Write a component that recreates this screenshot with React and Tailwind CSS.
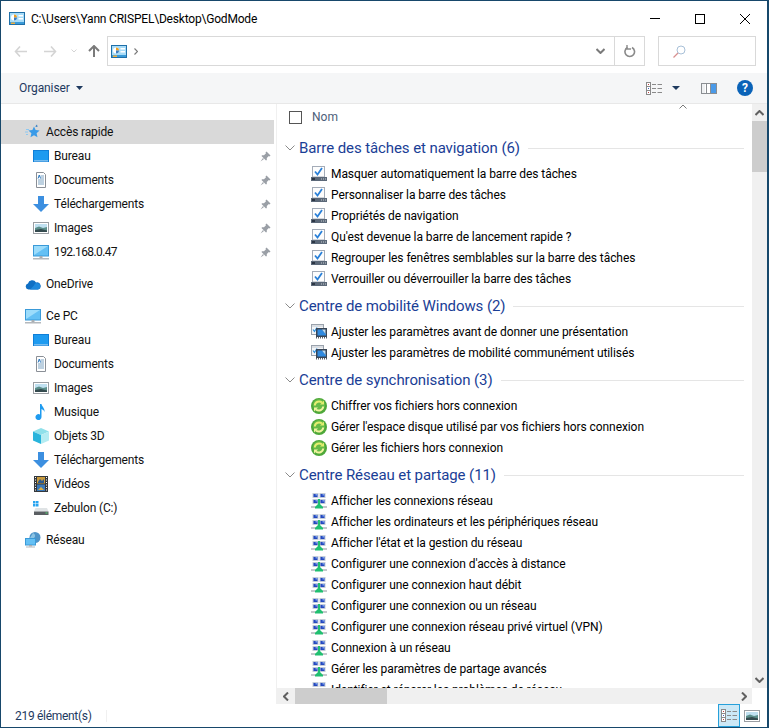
import React from "react";

const FolderGodIcon = ({ className }) => (
  <svg className={className} width="16" height="13" viewBox="0 0 16 13">
    <rect x="0.5" y="0.5" width="15" height="12" fill="#a8dcf8" stroke="#1f6fa8" />
    <rect x="1" y="10" width="14" height="2" fill="#3a9ad8" />
    <circle cx="5" cy="5.5" r="3" fill="#fff" />
    <path d="M5 5.5V2.5a3 3 0 0 1 3 3z" fill="#f0a020" />
    <path d="M5 5.5h3a3 3 0 0 1-3 3z" fill="#3a7cc0" />
    <rect x="9.5" y="3" width="4.5" height="1.5" fill="#fff" />
    <rect x="9.5" y="6" width="4.5" height="1.5" fill="#fff" />
    <rect x="2" y="10.5" width="4" height="1.5" fill="#f0b040" />
  </svg>
);

const Pin = () => (
  <svg width="11" height="11" viewBox="0 0 11 11">
    <path d="M6.5 0.5 10.5 4.5 9.5 5.5 8.8 5 6.8 7 6.8 9 6 9.5 1.5 5 2 4.2H4L6 2.2 5.5 1.5z" fill="#9a9fa6" />
    <path d="M3 7 0.5 10.5 4 8z" fill="#9a9fa6" />
  </svg>
);

const Star = () => (
  <svg width="16" height="16" viewBox="0 0 16 16">
    <path d="M9 2.5l1.6 3.6 4 .4-3 2.7.9 4L9 11.2l-3.5 2 .9-4-3-2.7 4-.4z" fill="#3a9be8" />
    <path d="M1 5.5h3M0 8h3M1 10.5h2" stroke="#8cc8f2" strokeWidth="1" />
    <path d="M12 0.5l.5 2.5-2.3-.5z" fill="#2a78c0" />
  </svg>
);

const Desk = () => (
  <svg width="16" height="12" viewBox="0 0 16 12">
    <rect x="0" y="0" width="16" height="12" fill="#0f7fd8" />
    <rect x="1" y="1" width="14" height="9.5" fill="#1e9bf0" />
    <rect x="1" y="10.5" width="14" height="0.8" fill="#d8eefc" />
  </svg>
);

const Doc = () => (
  <svg width="16" height="16" viewBox="0 0 16 16">
    <path d="M3.5 0.5H10.5L12.5 2.5V15.5H3.5z" fill="#fff" stroke="#8a8f96" />
    <path d="M5 4h2M8 4h3M8 6h3M5 8h6M5 10h6M5 12h6" stroke="#7da3c2" strokeWidth="1" />
    <path d="M5 6.5 6.5 3 7.5 6.5" stroke="#2a78c0" strokeWidth="1" fill="none" />
  </svg>
);

const Down = () => (
  <svg width="16" height="16" viewBox="0 0 16 16">
    <path d="M5 0H11V8H16L8 16 0 8H5z" fill="#3c8fe0" />
  </svg>
);

const Pic = () => (
  <svg width="16" height="12" viewBox="0 0 16 12">
    <rect x="0.5" y="0.5" width="15" height="11" fill="#fff" stroke="#9a9ea3" />
    <rect x="2" y="2" width="12" height="4" fill="#bfe0f0" />
    <path d="M2 6 6 4.5 10 6 14 5V10H2z" fill="#5b8e8a" />
    <path d="M2 8 8 7 14 8.5V10H2z" fill="#344a4e" />
  </svg>
);

const Monitor = () => (
  <svg width="16" height="15" viewBox="0 0 16 15">
    <rect x="0.5" y="0.5" width="15" height="10.5" fill="#64c0f4" stroke="#3a9ad8" />
    <path d="M1 1H15L1 10z" fill="#9cdcfb" />
    <rect x="6.5" y="11" width="3" height="2" fill="#a8adb2" />
    <rect x="0" y="13" width="16" height="1.5" fill="#b4b8bc" />
  </svg>
);

const Cloud = () => (
  <svg width="16" height="11" viewBox="0 0 16 11">
    <path d="M3.5 10.5A3 3 0 0 1 3 4.6 4.3 4.3 0 0 1 11 3.4 3.6 3.6 0 0 1 13 10.5z" fill="#0f6fc4" />
    <path d="M5 10.5 9 6.5a3 3 0 0 1 6 1.5 2.5 2.5 0 0 1-2 2.5z" fill="#1e88dc" />
  </svg>
);

const Music = () => (
  <svg width="16" height="16" viewBox="0 0 16 16">
    <path d="M7 0H8.5C9 3 12 4 11.5 8 11 6 9.5 5.5 8.5 5V13A3 3 0 1 1 7 10.5z" fill="#1e9bf0" />
  </svg>
);

const Cube = () => (
  <svg width="16" height="16" viewBox="0 0 16 16">
    <path d="M8 0 16 3.5 8 7 0 3.5z" fill="#8fe0ea" />
    <path d="M0 3.5 8 7V16L0 12.5z" fill="#28b4dc" />
    <path d="M16 3.5 8 7V16L16 12.5z" fill="#b4ecf2" />
  </svg>
);

const Film = () => (
  <svg width="14" height="16" viewBox="0 0 14 16">
    <rect x="0" y="0" width="14" height="16" fill="#34383c" />
    <rect x="3" y="1" width="8" height="6.5" fill="#c89a3c" />
    <rect x="3" y="8.5" width="8" height="6.5" fill="#3a78b8" />
    <path d="M4 6l2-3 2 2 2-2v4H4z" fill="#2a5a90" />
    <path d="M4 14l3-3 3 3z" fill="#e0b040" />
    <path d="M1 1.5h1M1 4h1M1 6.5h1M1 9h1M1 11.5h1M1 14h1M12 1.5h1M12 4h1M12 6.5h1M12 9h1M12 11.5h1M12 14h1" stroke="#fff" />
  </svg>
);

const Drive = () => (
  <svg width="16" height="15" viewBox="0 0 16 15">
    <rect x="0" y="0" width="2.5" height="2.5" fill="#28a4f0" />
    <rect x="3" y="0" width="2.5" height="2.5" fill="#28a4f0" />
    <rect x="0" y="3" width="2.5" height="2.5" fill="#28a4f0" />
    <rect x="3" y="3" width="2.5" height="2.5" fill="#28a4f0" />
    <path d="M2.5 7H14L15.5 10.5H1z" fill="#dfe3e5" />
    <rect x="1" y="10.5" width="14.5" height="3.5" fill="#5a5e62" />
    <rect x="12.5" y="11.5" width="2" height="1" fill="#50e070" />
  </svg>
);

const Globe = () => (
  <svg width="16" height="16" viewBox="0 0 16 16">
    <circle cx="10" cy="5.5" r="5.5" fill="#4f94c8" />
    <path d="M8 1c2 1 3 3 1 5s-3 1-4 0" fill="#8cc4e4" />
    <rect x="0.5" y="6.5" width="10" height="6.5" fill="#64c0f4" stroke="#3a9ad8" />
    <rect x="4" y="13" width="3" height="1.5" fill="#a8adb2" />
    <rect x="1" y="14.5" width="9" height="1" fill="#b4b8bc" />
  </svg>
);

const TaskIcon = () => (
  <svg width="16" height="15" viewBox="0 0 16 15">
    <rect x="1.5" y="0.5" width="12" height="10.5" fill="#fdfdfd" stroke="#a4acb8" />
    <path d="M4 5.5 6.5 8.5 11 2" fill="none" stroke="#2a80d8" strokeWidth="1.8" />
    <rect x="0" y="11" width="16" height="4" fill="#5b6878" />
    <path d="M10 13h5" stroke="#c8ccd0" strokeDasharray="1 1" />
    <rect x="1" y="12" width="3" height="2" fill="#2c3644" />
  </svg>
);

const MobIcon = () => (
  <svg width="16" height="15" viewBox="0 0 16 15">
    <rect x="0.5" y="0.5" width="12" height="10" fill="#f4f6f8" stroke="#9aa2ac" />
    <path d="M1 2h11" stroke="#c0c6ce" />
    <path d="M2 5.5 3.5 7.5 6 3.5" fill="none" stroke="#2a90e0" strokeWidth="1.2" />
    <rect x="5.5" y="4.5" width="10" height="8" fill="#3a4656" stroke="#3a4656" />
    <path d="M6.5 5.5H11L15 10V11.5H6.5z" fill="#2f8ae0" />
    <path d="M11 5.5H14.5V10z" fill="#bcdcf4" />
    <path d="M5 13.8h11" stroke="#555c66" strokeWidth="1.5" strokeDasharray="1 1" />
  </svg>
);

const SyncIcon = () => (
  <svg width="16" height="16" viewBox="0 0 16 16">
    <circle cx="8" cy="8" r="8" fill="#4ea83a" />
    <circle cx="8" cy="7" r="6" fill="#66bb48" />
    <path d="M3.8 7.5A4.3 4.3 0 0 1 11 4.6" fill="none" stroke="#e6ee70" strokeWidth="2" />
    <path d="M9 6.5H13V2.5z" fill="#e6ee70" />
    <path d="M12.2 8.5A4.3 4.3 0 0 1 5 11.4" fill="none" stroke="#f2f4a0" strokeWidth="2" />
    <path d="M7 9.5H3V13.5z" fill="#f2f4a0" />
  </svg>
);

const NetSq = ({ x, y }) => (
  <>
    <rect x={x} y={y} width="6" height="5" fill="#c4ccd8" />
    <rect x={x + 1} y={y + 1} width="4" height="3" fill="#2448c0" />
    <rect x={x + 3} y={y + 1} width="2" height="1.5" fill="#7ca0e8" />
  </>
);

const NetIcon = () => (
  <svg width="16" height="16" viewBox="0 0 16 16">
    <NetSq x={1.5} y={0} />
    <NetSq x={8.5} y={0} />
    <NetSq x={1.5} y={6} />
    <NetSq x={8.5} y={6} />
    <rect x="0" y="13" width="16" height="2" fill="#c4c8cc" />
    <rect x="7" y="6" width="2" height="5" fill="#20c070" />
    <path d="M8 10 12 14V15.5H4V14z" fill="#20c070" />
  </svg>
);

const DetailsIcon = () => (
  <svg width="16" height="13" viewBox="0 0 16 13">
    <rect x="0.5" y="0.5" width="4" height="12" fill="#fff" stroke="#8a8a8a" />
    <path d="M1 4.5h3M1 8.5h3" stroke="#8a8a8a" />
    <rect x="2" y="2" width="1" height="1" fill="#c04040" />
    <rect x="2" y="6" width="1" height="1" fill="#4060c0" />
    <rect x="2" y="10" width="1" height="1" fill="#c04040" />
    <path d="M6 2.5h4M11.5 2.5H16M6 6.5h4M11.5 6.5H16M6 10.5h4M11.5 10.5H16" stroke="#8a8a8a" />
  </svg>
);

const Chev = ({ d, color = "#6a6a6a", w = 9, h = 6, sw = 2, vb = "0 0 9 6" }) => (
  <svg width={w} height={h} viewBox={vb}>
    <path d={d} fill="none" stroke={color} strokeWidth={sw} />
  </svg>
);

const side = [
  { label: "Accès rapide", icon: <Star />, top: true, sel: true },
  { label: "Bureau", icon: <Desk />, pin: true },
  { label: "Documents", icon: <Doc />, pin: true },
  { label: "Téléchargements", icon: <Down />, pin: true },
  { label: "Images", icon: <Pic />, pin: true },
  { label: "192.168.0.47", icon: <Monitor />, pin: true, last: true, digits: true },
  { label: "OneDrive", icon: <Cloud />, top: true, last: true },
  { label: "Ce PC", icon: <Monitor />, top: true },
  { label: "Bureau", icon: <Desk /> },
  { label: "Documents", icon: <Doc /> },
  { label: "Images", icon: <Pic /> },
  { label: "Musique", icon: <Music /> },
  { label: "Objets 3D", icon: <Cube /> },
  { label: "Téléchargements", icon: <Down /> },
  { label: "Vidéos", icon: <Film /> },
  { label: "Zebulon (C:)", icon: <Drive />, last: true },
  { label: "Réseau", icon: <Globe />, top: true },
];

const groups = [
  {
    title: "Barre des tâches et navigation (6)",
    icon: <TaskIcon />,
    items: [
      "Masquer automatiquement la barre des tâches",
      "Personnaliser la barre des tâches",
      "Propriétés de navigation",
      "Qu'est devenue la barre de lancement rapide ?",
      "Regrouper les fenêtres semblables sur la barre des tâches",
      "Verrouiller ou déverrouiller la barre des tâches",
    ],
  },
  {
    title: "Centre de mobilité Windows (2)",
    icon: <MobIcon />,
    items: [
      "Ajuster les paramètres avant de donner une présentation",
      "Ajuster les paramètres de mobilité communément utilisés",
    ],
  },
  {
    title: "Centre de synchronisation (3)",
    icon: <SyncIcon />,
    items: [
      "Chiffrer vos fichiers hors connexion",
      "Gérer l'espace disque utilisé par vos fichiers hors connexion",
      "Gérer les fichiers hors connexion",
    ],
  },
  {
    title: "Centre Réseau et partage (11)",
    icon: <NetIcon />,
    items: [
      "Afficher les connexions réseau",
      "Afficher les ordinateurs et les périphériques réseau",
      "Afficher l'état et la gestion du réseau",
      "Configurer une connexion d'accès à distance",
      "Configurer une connexion haut débit",
      "Configurer une connexion ou un réseau",
      "Configurer une connexion réseau privé virtuel (VPN)",
      "Connexion à un réseau",
      "Gérer les paramètres de partage avancés",
      "Identifier et réparer les problèmes de réseau",
    ],
  },
];

export default function App() {
  return (
    <div className="w-[769px] h-[728px] flex flex-col overflow-hidden bg-white border-t border-l border-b border-r-2 border-[#17486b] font-['Roboto',sans-serif] text-[12px] text-black">
      {/* Title bar */}
      <div className="h-[35px] shrink-0 flex items-center pl-[8px]">
        <FolderGodIcon />
        <span className="ml-[6px] text-[12px] tracking-[-0.19px]">C:\Users\Yann CRISPEL\Desktop\GodMode</span>
        <div className="ml-auto flex items-center pr-[17px] gap-[35px]">
          <div className="w-[10px] h-[1px] bg-black" />
          <div className="w-[10px] h-[10px] border border-black" />
          <svg width="10" height="10" viewBox="0 0 10 10"><path d="M0 0 10 10M10 0 0 10" stroke="#000" /></svg>
        </div>
      </div>
      {/* Nav row */}
      <div className="h-[37px] shrink-0 flex items-start">
        <div className="w-[106px] h-[30px] shrink-0 flex items-center pl-[13px]">
          <svg width="13" height="11" viewBox="0 0 13 11"><path d="M6 0.5 1.5 5.5 6 10.5M1.5 5.5H13" fill="none" stroke="#d4d4d4" strokeWidth="1.6" /></svg>
          <svg className="ml-[17px]" width="13" height="11" viewBox="0 0 13 11"><path d="M7 0.5 11.5 5.5 7 10.5M11.5 5.5H0" fill="none" stroke="#d4d4d4" strokeWidth="1.6" /></svg>
          <svg className="ml-[14px]" width="6" height="4" viewBox="0 0 6 4"><path d="M0.5 0.5 3 3 5.5 0.5" fill="none" stroke="#d4d4d4" /></svg>
          <svg className="ml-[11px]" width="12" height="12" viewBox="0 0 12 12"><path d="M1 6 6 1 11 6M6 1V12" fill="none" stroke="#7a7a7a" strokeWidth="2" /></svg>
        </div>
        <div className="w-[538px] h-[30px] shrink-0 border border-[#d9d9d9] flex items-center pl-[3px]">
          <FolderGodIcon />
          <svg className="ml-[7px]" width="4" height="7" viewBox="0 0 4 7"><path d="M0.5 0.5 3.5 3.5 0.5 6.5" fill="none" stroke="#7a7a7a" strokeWidth="1.2" /></svg>
          <div className="ml-auto mr-[9px]">
            <Chev d="M0.5 1 4.5 5 8.5 1" color="#7a7a7a" />
          </div>
          <div className="w-[30px] h-full border-l border-[#d9d9d9] flex items-center justify-center">
            <svg width="12" height="13" viewBox="0 0 12 13"><path d="M3.5 2.5A4.8 4.8 0 1 0 8 2.5" fill="none" stroke="#8a8a8a" strokeWidth="1.6" /><path d="M3 0V4H7" fill="none" stroke="#8a8a8a" strokeWidth="1.4" /></svg>
          </div>
        </div>
        <div className="ml-[13px] w-[98px] h-[30px] shrink-0 border border-[#d9d9d9] flex items-center pl-[14px]">
          <svg width="13" height="13" viewBox="0 0 13 13"><circle cx="8" cy="5" r="4" fill="none" stroke="#a8c0d8" /><path d="M5 8 0.5 12.5" stroke="#d89090" strokeWidth="1.2" /></svg>
        </div>
      </div>
      {/* Toolbar */}
      <div className="h-[31px] shrink-0 bg-[#f5f6f7] border-b border-[#e8e8e8] flex items-center pl-[18px]">
        <span className="text-[#1e3a5f] tracking-[-0.1px]">Organiser</span>
        <svg className="ml-[6px]" width="7" height="4" viewBox="0 0 7 4"><path d="M0 0H7L3.5 4z" fill="#1e3a5f" /></svg>
        <div className="ml-auto flex items-center">
          <DetailsIcon />
          <svg className="ml-[10px]" width="8" height="4" viewBox="0 0 8 4"><path d="M0 0H8L4 4z" fill="#1e3a5f" /></svg>
          <svg className="ml-[21px]" width="16" height="11" viewBox="0 0 16 11">
            <rect x="0.5" y="0.5" width="15" height="10" fill="#fff" stroke="#8a8e92" />
            <rect x="1" y="1" width="3" height="9" fill="#eef0f2" />
            <rect x="5" y="1" width="1" height="9" fill="#8a8e92" />
            <rect x="10" y="1" width="5" height="9" fill="#4a9ae8" />
            <rect x="9" y="1" width="1" height="9" fill="#8a8e92" />
          </svg>
          <div className="ml-[20px] mr-[14px] w-[16px] h-[16px] rounded-full bg-[#0a63b8] flex items-center justify-center text-white text-[12px] font-bold leading-none">?</div>
        </div>
      </div>
      {/* Main */}
      <div className="flex-1 min-h-0 flex">
        {/* Sidebar */}
        <div className="w-[276px] shrink-0 pt-[16px] border-r border-[#f0f0f0]">
          {side.map((s, i) => (
            <div
              key={i}
              className={`h-[24px] w-[273px] flex items-center ${s.sel ? "bg-[#d9d9d9]" : ""} ${s.last ? "mb-[8px]" : ""} ${s.top ? "pl-[24px]" : "pl-[32px]"}`}
            >
              <span className="w-[16px] h-[16px] shrink-0 flex items-center justify-center">{s.icon}</span>
              <span className={`ml-[5px] text-[#111] ${s.digits ? "tracking-[-0.6px]" : "tracking-[-0.15px]"}`}>{s.label}</span>
              {s.pin && (
                <span className="ml-auto mr-[3px] flex items-center"><Pin /></span>
              )}
            </div>
          ))}
        </div>
        {/* Right pane */}
        <div className="flex-1 min-w-0 flex flex-col">
          <div className="flex-1 min-h-0 flex">
            <div className="flex-1 min-w-0 overflow-hidden">
              <div className="relative h-[26px] flex items-center pl-[12px]">
                <div className="w-[13px] h-[13px] border border-[#555]" />
                <span className="ml-[10px] text-[#4c607a]">Nom</span>
                <svg className="absolute left-[402px] top-[0px]" width="8" height="5" viewBox="0 0 8 5"><path d="M0.5 4.5 4 1 7.5 4.5" fill="none" stroke="#7a7a7a" /></svg>
              </div>
              <div className="pt-[6px]">
                {groups.map((g) => (
                  <div key={g.title} className="mb-[5px]">
                    <div className="h-[24px] flex items-center pl-[8px] pr-[8px] mb-[3px]">
                      <svg width="10" height="6" viewBox="0 0 10 6"><path d="M0.5 0.5 5 5 9.5 0.5" fill="none" stroke="#8a8a8a" /></svg>
                      <span className="ml-[4px] text-[15px] text-[#1a3e96] whitespace-nowrap tracking-[-0.09px]">{g.title}</span>
                      <div className="ml-[8px] flex-1 h-[1px] bg-[#e5e5e5]" />
                    </div>
                    {g.items.map((t) => (
                      <div key={t} className="h-[21px] flex items-center pl-[34px]">
                        <span className="w-[16px] h-[16px] shrink-0 flex items-center justify-center">{g.icon}</span>
                        <span className="ml-[4px] whitespace-nowrap tracking-[-0.08px]">{t}</span>
                      </div>
                    ))}
                  </div>
                ))}
              </div>
            </div>
            {/* V scrollbar */}
            <div className="w-[15px] shrink-0 bg-[#f0f0f0] flex flex-col items-center">
              <div className="h-[17px] w-full flex items-center justify-center">
                <Chev d="M0.5 5 4.5 1 8.5 5" color="#606060" />
              </div>
              <div className="h-[51px] w-full bg-[#cdcdcd]" />
              <div className="mt-auto h-[17px] w-full flex items-center justify-center">
                <Chev d="M0.5 1 4.5 5 8.5 1" color="#606060" />
              </div>
            </div>
          </div>
          {/* H scrollbar */}
          <div className="h-[16px] shrink-0 flex">
            <div className="flex-1 bg-[#f0f0f0] flex items-center mr-[15px]">
              <div className="w-[18px] h-full flex items-center justify-center">
                <svg width="6" height="9" viewBox="0 0 6 9"><path d="M5 0.5 1 4.5 5 8.5" fill="none" stroke="#606060" strokeWidth="2" /></svg>
              </div>
              <div className="w-[92px] h-full bg-[#cdcdcd]" />
              <div className="ml-auto w-[17px] h-full flex items-center justify-center">
                <svg width="6" height="9" viewBox="0 0 6 9"><path d="M1 0.5 5 4.5 1 8.5" fill="none" stroke="#606060" strokeWidth="2" /></svg>
              </div>
            </div>
          </div>
        </div>
      </div>
      {/* Status bar */}
      <div className="h-[23px] shrink-0 flex items-center pl-[14px]">
        <span className="text-[#1e3a5f] tracking-[-0.3px]">219 élément(s)</span>
        <div className="ml-[14px] w-[1px] h-[12px] bg-[#f0f0f0]" />
        <div className="ml-auto flex items-center pr-[7px]">
          <div className="w-[22px] h-[23px] bg-[#cce8f6] border border-[#26a0da] flex items-center justify-center">
            <DetailsIcon />
          </div>
          <span className="ml-[4px] flex items-center"><Pic /></span>
        </div>
      </div>
    </div>
  );
}
